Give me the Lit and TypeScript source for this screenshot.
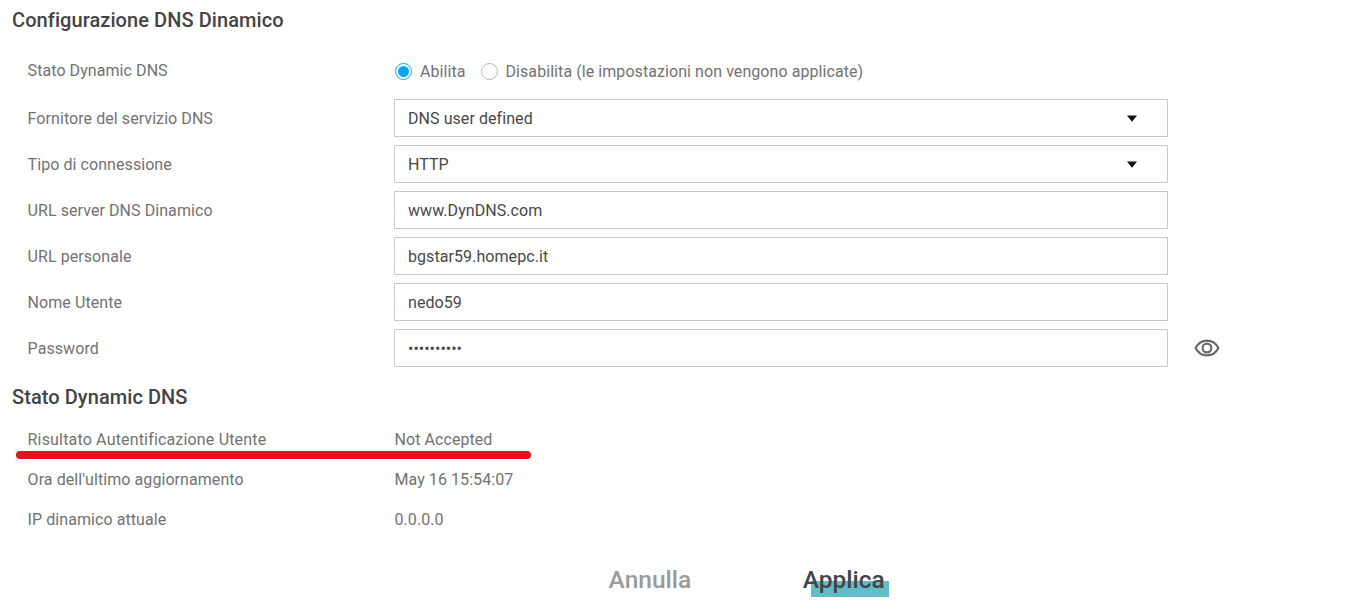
import { LitElement, html, css } from "lit";
import { customElement } from "lit/decorators.js";

const Caret = html`<svg class="caret" width="10" height="7" viewBox="0 0 10 7"><path d="M0 0.5h10L5 6.8z" fill="#111"/></svg>`;

const Eye = html`<svg class="eye" width="26" height="18" viewBox="0 0 26 18" fill="none" stroke="#6a6a6a" stroke-width="2.2"><path d="M1.6 9C4 4.2 8 1.6 13 1.6S22 4.2 24.4 9C22 13.8 18 16.4 13 16.4S4 13.8 1.6 9z"/><circle cx="13" cy="9" r="4.4"/></svg>`;

@customElement("app-root")
export class AppRoot extends LitElement {
  static styles = css`
    :host {
      display: block;
      position: relative;
      width: 1347px;
      height: 612px;
      overflow: hidden;
      background: #fff;
      font-family: Roboto, "Liberation Sans", sans-serif;
      font-size: 16px;
      letter-spacing: 0.07px;
      color: #727272;
    }
    .page { display: flex; flex-direction: column; padding: 8px 0 0 12px; }
    h2 { margin: 0; font-size: 20px; line-height: 24px; font-weight: 500; letter-spacing: 0.07px; color: #444; }
    .form { display: flex; flex-direction: column; gap: 8px; padding: 0 0 0 15.6px; margin-top: 19px; }
    .row { display: grid; grid-template-columns: 366.4px 774px auto; align-items: center; }
    .radio-row { height: 38px; margin-bottom: 2px; }
    .radios { display: flex; align-items: center; padding: 2px 0 0 1px; }
    .radio { display: flex; align-items: center; gap: 8px; margin-right: 15px; }
    .dot { width: 17px; height: 17px; box-sizing: border-box; border-radius: 50%; border: 1px solid #b5b5b5; background: #fff; }
    .dot.on { border-color: #0aa5f0; padding: 2px; background: #0aa5f0; background-clip: content-box; }
    .field {
      box-sizing: border-box;
      height: 38px;
      border: 1px solid #c9c9cf;
      padding: 0 13px;
      display: flex;
      align-items: center;
      justify-content: space-between;
      color: #484848;
    }
    .caret { margin-right: 17px; }
    .eye { margin-left: 26px; display: block; }
    .bullets { letter-spacing: 0; }
    .status-head { margin-top: 18px; }
    .status { display: flex; flex-direction: column; padding: 0 0 0 15.6px; margin-top: 10px; }
    .srow { display: grid; grid-template-columns: 366.9px auto; height: 40px; align-items: center; }
    .wide { letter-spacing: 0.17px; }
    .actions { display: flex; padding-left: 596.6px; margin-top: 25px; gap: 111.5px; }
    .btn { font-size: 24.5px; line-height: 32px; font-weight: 500; letter-spacing: 0; position: relative; }
    .cancel { color: #9a9a9a; }
    .apply { color: #444; }
    .teal { position: absolute; left: 8px; top: 17px; width: 78px; height: 16px; background: #62bdc8; }
    .apply span { position: relative; }
    .mark { position: absolute; left: 16px; top: 451px; width: 515px; height: 8px; border-radius: 4px; background: #e8101c; }
  `;

  render() {
    return html`
      <div class="page">
        <h2>Configurazione DNS Dinamico</h2>
        <div class="form">
          <div class="row radio-row">
            <div>Stato Dynamic DNS</div>
            <div class="radios">
              <div class="radio"><div class="dot on"></div>Abilita</div>
              <div class="radio"><div class="dot"></div>Disabilita (le impostazioni non vengono applicate)</div>
            </div>
          </div>
          <div class="row"><div>Fornitore del servizio DNS</div><div class="field">DNS user defined ${Caret}</div></div>
          <div class="row"><div>Tipo di connessione</div><div class="field">HTTP ${Caret}</div></div>
          <div class="row"><div>URL server DNS Dinamico</div><div class="field">www.DynDNS.com</div></div>
          <div class="row"><div>URL personale</div><div class="field">bgstar59.homepc.it</div></div>
          <div class="row"><div>Nome Utente</div><div class="field">nedo59</div></div>
          <div class="row"><div>Password</div><div class="field bullets">••••••••••</div>${Eye}</div>
        </div>
        <h2 class="status-head">Stato Dynamic DNS</h2>
        <div class="status">
          <div class="srow"><div class="wide">Risultato Autentificazione Utente</div><div>Not Accepted</div></div>
          <div class="srow"><div>Ora dell'ultimo aggiornamento</div><div>May 16 15:54:07</div></div>
          <div class="srow"><div>IP dinamico attuale</div><div>0.0.0.0</div></div>
        </div>
        <div class="actions">
          <div class="btn cancel">Annulla</div>
          <div class="btn apply"><div class="teal"></div><span>Applica</span></div>
        </div>
      </div>
      <div class="mark"></div>
    `;
  }
}
